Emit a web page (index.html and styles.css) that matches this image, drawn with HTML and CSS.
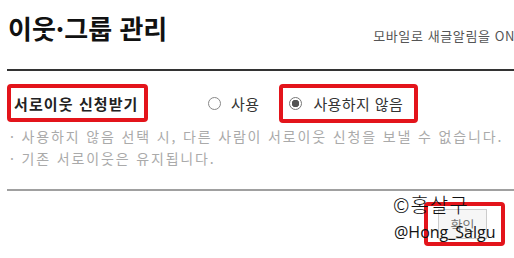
FILE: index.html
```html
<!DOCTYPE html>
<html lang="ko">
<head>
<meta charset="utf-8">
<link rel="stylesheet" href="styles.css">
</head>
<body>
<div class="page">
  <header class="head">
    <h1 class="title">이웃·그룹 관리</h1>
    <span class="mobile">모바일로 새글알림을 ON</span>
  </header>
  <div class="row">
    <div class="mark label-box"><span class="label">서로이웃 신청받기</span></div>
    <div class="opt first"><span class="radio"></span><span class="opt-text">사용</span></div>
    <div class="mark opt-box"><span class="radio on"></span><span class="opt-text">사용하지 않음</span></div>
  </div>
  <ul class="notes">
    <li>· 사용하지 않음 선택 시, 다른 사람이 서로이웃 신청을 보낼 수 없습니다.</li>
    <li>· 기존 서로이웃은 유지됩니다.</li>
  </ul>
  <div class="foot">
    <div class="mark btn-box"><button class="btn">확인</button></div>
    <div class="wm">
      <div class="wm1">©홍살구</div>
      <div class="wm2">@Hong_Salgu</div>
    </div>
  </div>
</div>
</body>
</html>
```

FILE: styles.css
```css
* { box-sizing: border-box; }
body {
  margin: 0;
  background: #fff;
  font-family: "Noto Sans CJK KR", "Noto Sans", sans-serif;
  color: #333;
  width: 514px;
  height: 258px;
  overflow: hidden;
}
.page { padding-left: 7px; }
.head {
  display: flex;
  justify-content: space-between;
  align-items: flex-start;
  height: 71px;
  padding-top: 12px;
  border-bottom: 2px solid #333;
}
.title {
  margin: 0 0 0 1px;
  font-size: 26px;
  line-height: 32px;
  font-weight: 700;
  color: #111;
}
.mobile {
  font-size: 13px;
  line-height: 20px;
  letter-spacing: 0.6px;
  color: #555;
  margin-top: 14px;
  margin-right: -1px;
  white-space: nowrap;
}
.row {
  display: flex;
  align-items: center;
  margin-top: 13px;
  height: 38px;
}
.mark {
  border: 4px solid #e3141b;
  border-radius: 4px;
}
.label-box {
  width: 141px;
  height: 38px;
  display: flex;
  align-items: center;
  padding-left: 3px;
}
.label {
  font-size: 15px;
  font-weight: 700;
  letter-spacing: 1.1px;
  color: #222;
  white-space: nowrap;
}
.opt { display: flex; align-items: center; }
.opt.first { margin-left: 60px; margin-right: 20px; }
.opt-box {
  height: 39px;
  display: flex;
  align-items: center;
  padding-left: 6px;
  padding-right: 11px;
}
.radio {
  width: 13px;
  height: 13px;
  border: 1px solid #888;
  border-radius: 50%;
  background: #fff;
  display: inline-block;
}
.radio.on {
  background: radial-gradient(circle, #555 0 3.5px, #fff 4px);
  border-color: #777;
}
.opt-text {
  font-size: 15px;
  letter-spacing: 0.4px;
  color: #333;
  margin-left: 10px;
}
.opt-box .opt-text { margin-left: 11px; }
.notes {
  list-style: none;
  margin: 3px 0 0 0;
  padding: 0 0 20px 0;
  font-size: 14px;
  line-height: 22px;
  letter-spacing: 1.85px;
  color: #aaa;
  border-bottom: 2px solid #a0a0a0;
  white-space: nowrap;
}
.notes li { padding-left: 3px; }
.foot {
  position: relative;
  display: flex;
  justify-content: flex-end;
  padding-right: 9px;
  padding-top: 11px;
}
.btn-box {
  width: 81px;
  height: 44px;
  padding: 3px 0 0 10px;
}
.btn {
  width: 49px;
  height: 30px;
  border: 1px solid #ccc;
  background: #f6f6f6;
  color: #777;
  font-family: "Noto Sans CJK KR", sans-serif;
  font-size: 13px;
  padding: 0;
}
.wm {
  position: absolute;
  left: 386px;
  top: 2px;
  color: #111;
}
.wm1 {
  font-size: 20px;
  line-height: 24px;
  font-weight: 300;
  letter-spacing: 1px;
}
.wm2 {
  font-family: "Open Sans", "Liberation Sans", sans-serif;
  font-size: 16px;
  line-height: 22px;
  margin-top: 4px;
  margin-left: 1px;
}
```
